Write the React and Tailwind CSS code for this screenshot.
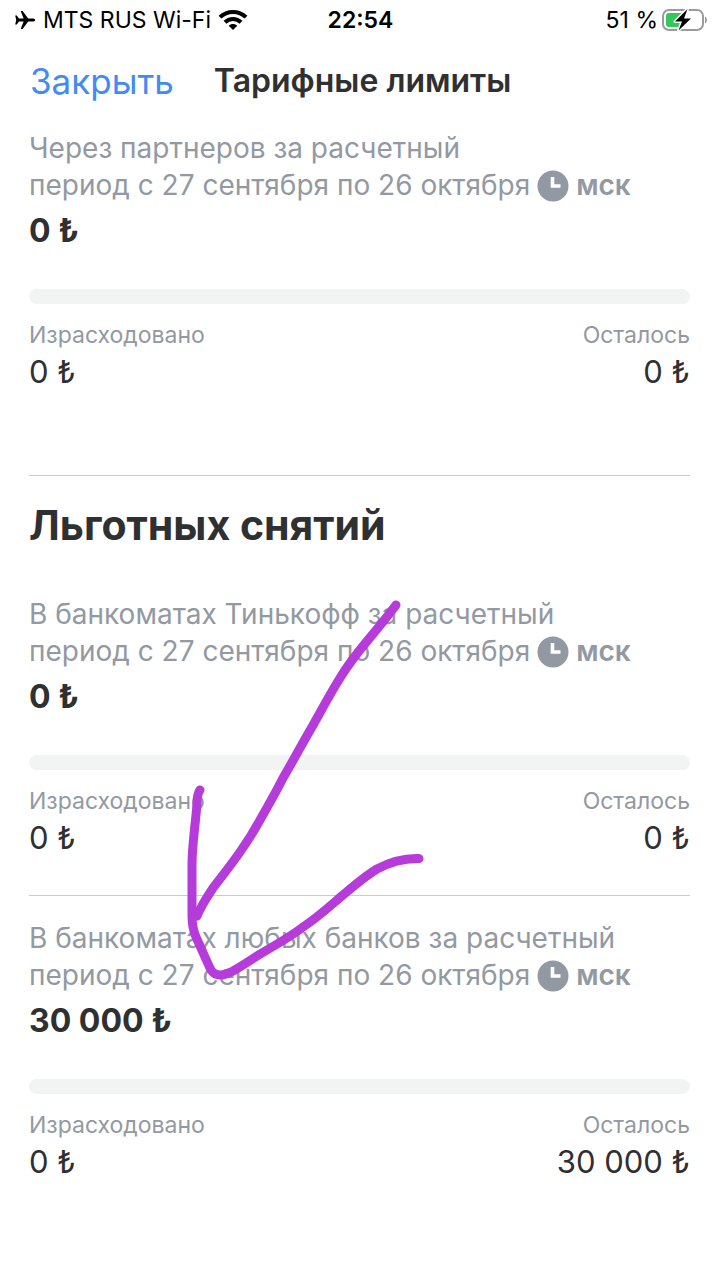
import React from 'react';

const MSK_PERIOD = 'период с 27 сентября по 26 октября';

const partnerLimit = { id: 'partners', title: 'Через партнеров за расчетный', total: '0', spent: '0', left: '0' };
const ownAtmLimit = { id: 'own-atm', title: 'В банкоматах Тинькофф за расчетный', total: '0', spent: '0', left: '0' };
const anyAtmLimit = { id: 'any-atm', title: 'В банкоматах любых банков за расчетный', total: '30 000', spent: '0', left: '30 000' };

const PlaneIcon = () => (
  <svg viewBox="0 0 22 20" className="h-5 w-[22px] shrink-0" aria-hidden="true">
    <path d="M21.2 10c0-1-1.2-1.6-2.6-1.6h-4.4L8.6.9H6.7l2.9 7.5H5L2.8 5.6H1.2L2.2 10l-1 4.4h1.6L5 11.6h4.600l-2.900 7.500h1.900l5.600-7.500h4.400c1.400 0 2.600-.600 2.600-1.600z" fill="#000" />
  </svg>
);

const WifiIcon = () => (
  <svg viewBox="0 0 30 22" className="h-[22px] w-[30px] shrink-0" aria-hidden="true">
    <g fill="none" stroke="#000" strokeWidth="4">
      <path d="M2 8.200C9.200 1.100 20.800 1.100 28 8.200" />
      <path d="M7 13.200c4.500-4.400 11.500-4.400 16 0" />
    </g>
    <path d="M15 21l-4.300-4.300c2.400-2.300 6.200-2.300 8.600 0z" fill="#000" />
  </svg>
);

const BatteryIcon = () => (
  <svg viewBox="0 0 46 26" className="h-[26px] w-[46px] shrink-0" aria-hidden="true">
    <rect x="2" y="3" width="40" height="20" rx="6" fill="#fff" stroke="#9b9b9b" strokeWidth="2" />
    <path d="M8 6h14v14H8a3 3 0 0 1-3-3V9a3 3 0 0 1 3-3z" fill="#34c759" />
    <path d="M44 9.500c2.500.800 2.500 6.200 0 7z" fill="#9b9b9b" />
    <path d="M26.500 2L14 14.500h7l-3.500 9L30 11.500h-7z" fill="#000" stroke="#fff" strokeWidth="3" paintOrder="stroke" strokeLinejoin="round" />
  </svg>
);

const ClockIcon = () => (
  <svg viewBox="0 0 32 32" className="h-8 w-8 shrink-0" aria-hidden="true">
    <circle cx="16" cy="16" r="15.500" fill="#9299a2" />
    <path d="M15.500 7V16h8" fill="none" stroke="#fff" strokeWidth="3.600" />
  </svg>
);

const LimitBlock = ({ limit }) => (
  <section>
    <p className="text-[28px] leading-[37px] text-[#9299a2]">{limit.title}</p>
    <div className="flex items-center gap-[7px] text-[28px] leading-[37px] text-[#9299a2]">
      <span>{MSK_PERIOD}</span>
      <ClockIcon />
      <span className="font-semibold">мск</span>
    </div>
    <p className="mt-[7px] text-[32px] leading-10 font-bold">{limit.total} ₺</p>
    <div className="mt-[38px] h-[15px] rounded-full bg-[#f2f4f4]" />
    <dl className="mt-4 flex justify-between">
      <div>
        <dt className="text-[23px] leading-[30px] text-[#9299a2]">Израсходовано</dt>
        <dd className="mt-0.5 text-[31px] leading-10">{limit.spent} ₺</dd>
      </div>
      <div className="text-right">
        <dt className="text-[23px] leading-[30px] text-[#9299a2]">Осталось</dt>
        <dd className="mt-0.5 text-[31px] leading-10">{limit.left} ₺</dd>
      </div>
    </dl>
  </section>
);

const App = () => {
  return (
    <div className="relative min-h-screen overflow-hidden bg-white pb-24 font-['Inter','Liberation_Sans',sans-serif] text-[#2f3032]">
      <div className="grid h-10 grid-cols-[1fr_auto_1fr] items-center pr-3 pl-3.5 text-[23px] text-black">
        <div className="flex items-center gap-[7px]">
          <PlaneIcon />
          <span className="whitespace-nowrap">MTS RUS Wi-Fi</span>
          <WifiIcon />
        </div>
        <span className="font-semibold">22:54</span>
        <div className="flex items-center justify-end gap-[3px]">
          <span>51 %</span>
          <BatteryIcon />
        </div>
      </div>

      <header className="flex h-[90px] items-center gap-10 pb-2 pl-[30px]">
        <button type="button" className="text-[35px] text-[#438bf4]">Закрыть</button>
        <h1 className="text-[32px] font-semibold">Тарифные лимиты</h1>
      </header>

      <main className="px-[29px]">
        <LimitBlock limit={partnerLimit} />
        <hr className="mt-[83px] border-[#c9cbcc]" />
        <h2 className="mt-6 mb-[46px] text-[41px] leading-[50px] font-bold">Льготных снятий</h2>
        <LimitBlock limit={ownAtmLimit} />
        <hr className="mt-[37px] mb-6 border-[#c9cbcc]" />
        <LimitBlock limit={anyAtmLimit} />
      </main>

      {/* hand-drawn arrow over the limits */}
      <svg viewBox="0 0 240 384" className="pointer-events-none absolute top-[597px] left-[184px] h-96 w-60" aria-hidden="true">
        <g fill="none" stroke="#b63bdb" strokeWidth="9" strokeLinecap="round" strokeLinejoin="round">
          <path d="M212 8C203 20 194 31 184 43C174 55 165 66 156 81C146 97 137 114 128 130C118 147 109 164 99 181C92 195 84 209 76 223C70 234 63 245 56 255C47 268 38 279 29 291C23 300 17 309 13 319" />
          <path d="M16 193C13 197 13 202 13 207C11 232 8 248 8 268V319C8 328 9 333 12 340L25 369C28 376 31 378 37 378C42 378 45 376 49 374C58 369 67 363 76 357C90 349 106 340 119 330C133 321 146 309 159 298C170 289 181 279 193 272C206 265 220 261 235 261.500" />
        </g>
      </svg>
    </div>
  );
};

export default App;
